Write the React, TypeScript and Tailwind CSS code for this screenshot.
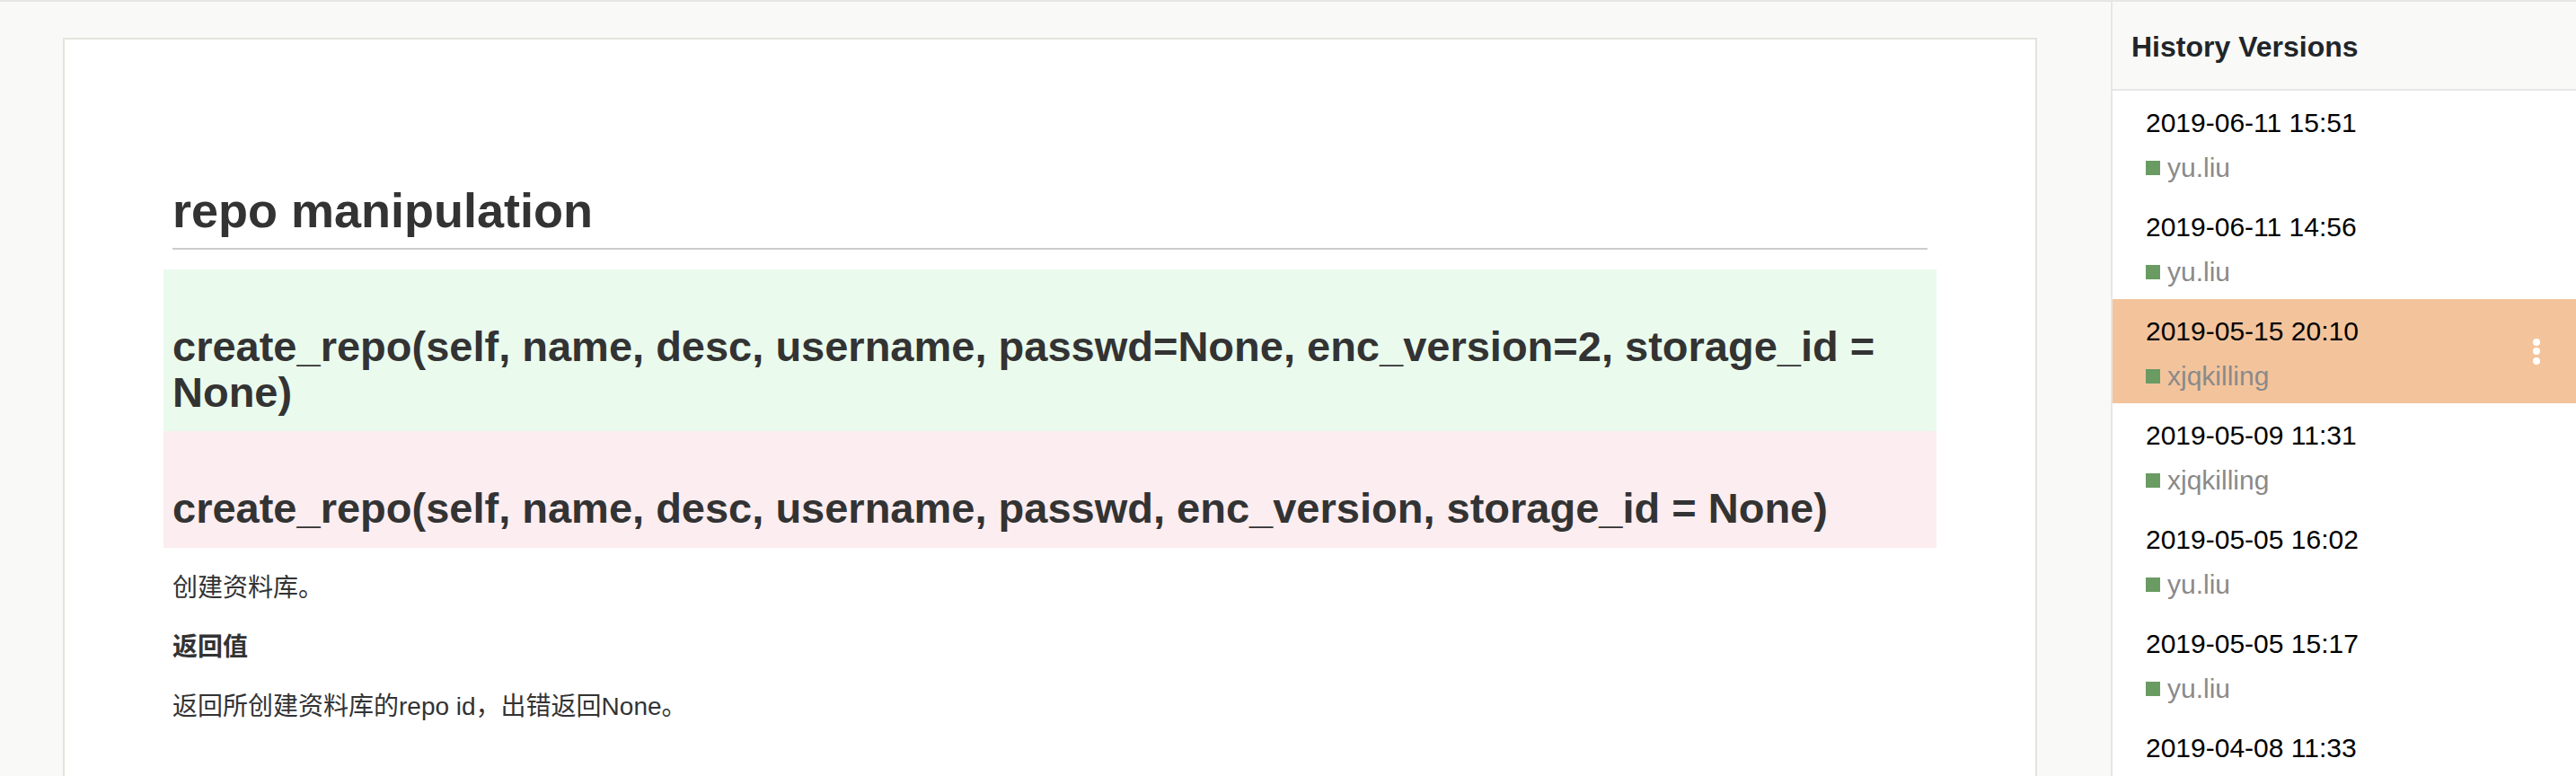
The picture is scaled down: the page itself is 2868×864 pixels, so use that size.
import React from "react";

const versions = [
  { date: "2019-06-11 15:51", user: "yu.liu" },
  { date: "2019-06-11 14:56", user: "yu.liu" },
  { date: "2019-05-15 20:10", user: "xjqkilling", active: true },
  { date: "2019-05-09 11:31", user: "xjqkilling" },
  { date: "2019-05-05 16:02", user: "yu.liu" },
  { date: "2019-05-05 15:17", user: "yu.liu" },
  { date: "2019-04-08 11:33", user: "yu.liu" },
];

export default function App() {
  return (
    <div
      className="w-[2868px] h-[864px] overflow-hidden flex bg-[#f9f9f7] border-t-2 border-[#e6e6e6]"
      style={{ fontFamily: '"Liberation Sans", "Noto Sans CJK SC", Arial, sans-serif' }}
    >
      {/* main area */}
      <div className="w-[2350px] shrink-0 pl-[70px] pr-[82px] pt-[40px]">
        <div className="h-[1000px] bg-white border-2 border-[#e4e4dc] px-[120px] pt-[157px] text-[#333]">
          <h1 className="text-[54px] leading-[67px] font-bold pb-[8px] border-b-2 border-[#cccccc]">
            repo manipulation
          </h1>
          <div className="mt-[22px] -mx-[10px] px-[10px] bg-[#eafbee] pt-[60px] pb-[18px]">
            <h2 className="text-[47px] leading-[51px] font-bold">
              create_repo(self, name, desc, username, passwd=None, enc_version=2, storage_id = None)
            </h2>
          </div>
          <div className="-mx-[10px] px-[10px] bg-[#fbedf0] pt-[60px] pb-[19px]">
            <h2 className="text-[47px] leading-[51px] font-bold">
              create_repo(self, name, desc, username, passwd, enc_version, storage_id = None)
            </h2>
          </div>
          <p className="mt-[24px] text-[28px] leading-[42px]">创建资料库。</p>
          <p className="mt-[24px] text-[28px] leading-[42px] font-bold">返回值</p>
          <p className="mt-[24px] text-[28px] leading-[42px]">
            返回所创建资料库的repo id，出错返回None。
          </p>
        </div>
      </div>

      {/* sidebar */}
      <div className="w-[518px] shrink-0 border-l-2 border-[#e6e6e6] bg-white flex flex-col">
        <div className="h-[99px] shrink-0 bg-[#f9f9f7] border-b-2 border-[#e6e6e6] flex items-center pl-[21px]">
          <span className="text-[32px] font-bold text-[#212529] mt-[2px]">History Versions</span>
        </div>
        {versions.map((v) => (
          <div
            key={v.date}
            className={
              "h-[116px] shrink-0 flex items-center justify-between pl-[37px] pr-[40px] " +
              (v.active ? "bg-[#f3c49c]" : "bg-white")
            }
          >
            <div className="flex flex-col h-full pt-[18px]">
              <div className="text-[30px] leading-[36px] text-black">{v.date}</div>
              <div className="mt-[14px] flex items-center gap-[8px] h-[36px]">
                <span className="w-[16px] h-[16px] bg-[#699b63]" />
                <span className="text-[30px] leading-[36px] text-[#8a8a8a]">{v.user}</span>
              </div>
            </div>
            {v.active && (
              <div className="flex flex-col items-center gap-[2.5px]">
                <span className="w-[8px] h-[8px] rounded-full bg-white" />
                <span className="w-[8px] h-[8px] rounded-full bg-white" />
                <span className="w-[8px] h-[8px] rounded-full bg-white" />
              </div>
            )}
          </div>
        ))}
      </div>
    </div>
  );
}
